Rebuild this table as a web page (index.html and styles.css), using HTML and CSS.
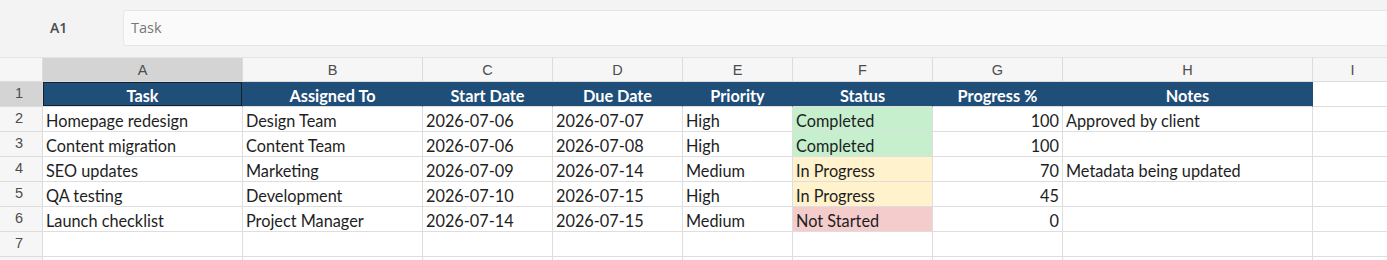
FILE: index.html
```html
<!DOCTYPE html>
<html>
<head>
<meta charset="utf-8">
<link rel="stylesheet" href="styles.css">
</head>
<body>
<div class="app">
  <div class="toolbar">
    <div class="namebox">A1</div>
    <div class="formula">Task</div>
  </div>
  <div class="sheet">
    <div class="corner"></div>
    <div class="ch sel">A</div><div class="ch">B</div><div class="ch">C</div><div class="ch">D</div><div class="ch">E</div><div class="ch">F</div><div class="ch">G</div><div class="ch">H</div><div class="ch">I</div>

    <div class="rh sel">1</div>
    <div class="c hd active">Task</div><div class="c hd">Assigned To</div><div class="c hd">Start Date</div><div class="c hd">Due Date</div><div class="c hd">Priority</div><div class="c hd">Status</div><div class="c hd">Progress %</div><div class="c hd">Notes</div><div class="c"></div>

    <div class="rh">2</div>
    <div class="c">Homepage redesign</div><div class="c">Design Team</div><div class="c">2026-07-06</div><div class="c">2026-07-07</div><div class="c">High</div><div class="c done">Completed</div><div class="c num">100</div><div class="c">Approved by client</div><div class="c"></div>

    <div class="rh">3</div>
    <div class="c">Content migration</div><div class="c">Content Team</div><div class="c">2026-07-06</div><div class="c">2026-07-08</div><div class="c">High</div><div class="c done">Completed</div><div class="c num">100</div><div class="c"></div><div class="c"></div>

    <div class="rh">4</div>
    <div class="c">SEO updates</div><div class="c">Marketing</div><div class="c">2026-07-09</div><div class="c">2026-07-14</div><div class="c">Medium</div><div class="c prog">In Progress</div><div class="c num">70</div><div class="c">Metadata being updated</div><div class="c"></div>

    <div class="rh">5</div>
    <div class="c">QA testing</div><div class="c">Development</div><div class="c">2026-07-10</div><div class="c">2026-07-15</div><div class="c">High</div><div class="c prog">In Progress</div><div class="c num">45</div><div class="c"></div><div class="c"></div>

    <div class="rh">6</div>
    <div class="c">Launch checklist</div><div class="c">Project Manager</div><div class="c">2026-07-14</div><div class="c">2026-07-15</div><div class="c">Medium</div><div class="c todo">Not Started</div><div class="c num">0</div><div class="c"></div><div class="c"></div>

    <div class="rh">7</div>
    <div class="c"></div><div class="c"></div><div class="c"></div><div class="c"></div><div class="c"></div><div class="c"></div><div class="c"></div><div class="c"></div><div class="c"></div>

    <div class="rh"></div>
    <div class="c"></div><div class="c"></div><div class="c"></div><div class="c"></div><div class="c"></div><div class="c"></div><div class="c"></div><div class="c"></div><div class="c"></div>
  </div>
</div>
</body>
</html>
```
FILE: styles.css
```css
html, body {
  margin: 0;
  padding: 0;
  background: #ffffff;
  overflow: hidden;
}
.app {
  width: 1387px;
  height: 260px;
  overflow: hidden;
  font-family: Lato, "Open Sans", sans-serif;
}
.toolbar {
  display: flex;
  align-items: flex-start;
  height: 57px;
  box-sizing: border-box;
  background: #f3f3f3;
  padding-top: 10px;
  overflow: hidden;
}
.namebox {
  flex: 0 0 123px;
  box-sizing: border-box;
  padding-left: 50px;
  height: 36px;
  line-height: 36px;
  font-family: "Open Sans", sans-serif;
  font-weight: 600;
  font-size: 14px;
  color: #4a4a4a;
}
.formula {
  flex: 0 0 1300px;
  height: 36px;
  box-sizing: border-box;
  border: 1px solid #e6e6e6;
  border-radius: 3px;
  background: #fafafa;
  padding-left: 7px;
  line-height: 34px;
  font-family: "Open Sans", sans-serif;
  font-size: 14.5px;
  color: #777;
}
.sheet {
  display: grid;
  grid-template-columns: 43px 200px 180px 130px 130px 110px 140px 130px 250px 80px;
  grid-auto-rows: 25px;
}
.corner {
  background: #f6f6f6;
  border-right: 1px solid #dcdcdc;
  border-bottom: 1px solid #dcdcdc;
  border-top: 1px solid #e4e4e4;
}
.ch {
  background: #f6f6f6;
  border-right: 1px solid #dcdcdc;
  border-bottom: 1px solid #dcdcdc;
  border-top: 1px solid #e4e4e4;
  display: flex;
  align-items: center;
  justify-content: center;
  font-family: "Liberation Sans", Arial, sans-serif;
  font-size: 14.5px;
  color: #4d4d4d;
}
.ch.sel, .rh.sel {
  background: #d4d4d4;
}
.rh {
  background: #f6f6f6;
  border-right: 1px solid #dcdcdc;
  border-bottom: 1px solid #dcdcdc;
  display: flex;
  align-items: center;
  justify-content: center;
  padding-right: 4px;
  padding-bottom: 2px;
  font-family: "Liberation Sans", Arial, sans-serif;
  font-size: 14.5px;
  color: #4d4d4d;
}
.c {
  box-sizing: border-box;
  border-right: 1px solid #dedede;
  border-bottom: 1px solid #dedede;
  background: #ffffff;
  padding: 2px 3px 0 3px;
  display: flex;
  align-items: center;
  font-size: 16.3px;
  color: #1e1e1e;
  white-space: nowrap;
  overflow: hidden;
}
.c.hd {
  background: #1f4e79;
  border-right-color: #1f4e79;
  border-bottom-color: #dedede;
  color: #ffffff;
  font-weight: 700;
  justify-content: center;
}
.c.active {
  box-shadow: inset 0 0 0 1px #10202e;
}
.c.num {
  justify-content: flex-end;
}
.c.done { background: #c6efce; }
.c.prog { background: #fff2cc; }
.c.todo { background: #f4cccc; }
```
